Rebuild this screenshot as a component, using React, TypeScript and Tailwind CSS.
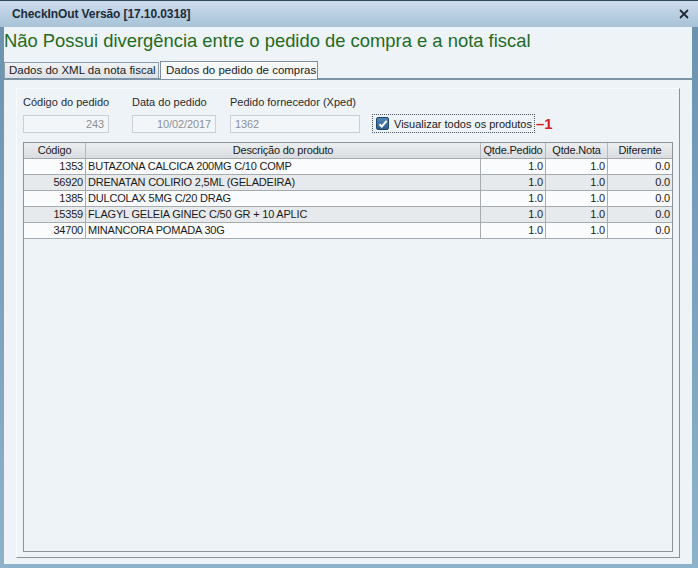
import React from 'react';

interface Produto {
    codigo: string;
    descricao: string;
    pedido: string;
    nota: string;
    diferente: string;
}

const PRODUTOS: Produto[] = [
    { codigo: '1353', descricao: 'BUTAZONA CALCICA 200MG C/10 COMP', pedido: '1.0', nota: '1.0', diferente: '0.0' },
    { codigo: '56920', descricao: 'DRENATAN COLIRIO 2,5ML (GELADEIRA)', pedido: '1.0', nota: '1.0', diferente: '0.0' },
    { codigo: '1385', descricao: 'DULCOLAX 5MG C/20 DRAG', pedido: '1.0', nota: '1.0', diferente: '0.0' },
    { codigo: '15359', descricao: 'FLAGYL GELEIA GINEC C/50 GR + 10 APLIC', pedido: '1.0', nota: '1.0', diferente: '0.0' },
    { codigo: '34700', descricao: 'MINANCORA POMADA 30G', pedido: '1.0', nota: '1.0', diferente: '0.0' },
];

const UI_FONT = 'font-["Liberation_Sans",Arial,sans-serif]';

function Field({ label, value, width, align }: { label: string; value: string; width: string; align: 'left' | 'right' }) {
    return (
        <div className="flex flex-col">
            <span className="h-[20px] text-[11px] leading-[14px] text-[#2b2b2b] whitespace-nowrap">{label}</span>
            <div
                className={`${width} h-[18px] border border-[#c9cfd5] bg-[#f3f6f9] px-[4px] text-[11px] tracking-[-0.1px] leading-[16px] text-[#8a8f94] ${align === 'right' ? 'text-right' : 'text-left'}`}
            >
                {value}
            </div>
        </div>
    );
}

export default function App() {
    return (
        <div className={`w-[698px] h-[568px] flex flex-col bg-gradient-to-b from-[#6b91ad] to-[#8fb2cb] border-t border-[#2f4b60] ${UI_FONT}`}>
            {/* barra de título */}
            <div className="h-[26px] flex items-center justify-between pl-[12px] pr-[9px] bg-gradient-to-b from-[#cddced] to-[#a7c2d7]">
                <span className="text-[12px] font-bold text-[#1d2c3a] tracking-[-0.1px]">CheckInOut Versão [17.10.0318]</span>
                <svg className="w-[10px] h-[10px]" viewBox="0 0 10 10" fill="none" stroke="#1f2a33" strokeWidth={1.8}>
                    <path d="M1 1l8 8M9 1l-8 8" />
                </svg>
            </div>

            {/* conteúdo */}
            <div className="flex-1 ml-[4px] mr-[6px] mb-[4px] bg-[#eef3f8] flex flex-col">
                <h1 className="h-[33px] pl-[0px] text-[18.4px] leading-[27px] text-[#1f6b1f] whitespace-nowrap">
                    Não Possui divergência entre o pedido de compra e a nota fiscal
                </h1>

                {/* abas */}
                <div className="h-[18px] flex items-end">
                    <div className="h-[16px] w-[155px] border border-b-0 border-[#8d9eac] bg-gradient-to-b from-[#f0f2f4] to-[#dde2e7] text-[11.5px] leading-[14px] text-[#1c1c1c] px-[4px] whitespace-nowrap">
                        Dados do XML da nota fiscal
                    </div>
                    <div className="h-[18px] w-[158px] ml-[1px] border border-b-0 border-[#7d8f9e] bg-[#f6f8fa] text-[11.5px] leading-[16px] text-[#1c1c1c] px-[5px] whitespace-nowrap relative top-[1px]">
                        Dados do pedido de compras
                    </div>
                </div>

                <div className="flex-1 border-t-2 border-[#7d93a6] flex flex-col pl-[12px] pr-[12px] pt-[8px] pb-[6px]">
                    <div className="flex-1 border-l border-t border-[#f8fafc] border-r border-b border-r-[#8c9196] border-b-[#8c9196] flex flex-col pl-[6px] pr-[6px] pt-[6px] pb-[5px]">
                        {/* campos */}
                        <div className="flex items-start">
                            <div className="w-[109px]">
                                <Field label="Código do pedido" value="243" width="w-[86px]" align="right" />
                            </div>
                            <div className="w-[98px]">
                                <Field label="Data do pedido" value="10/02/2017" width="w-[84px]" align="right" />
                            </div>
                            <div className="w-[142px]">
                                <Field label="Pedido fornecedor (Xped)" value="1362" width="w-[130px]" align="left" />
                            </div>
                            <div className="mt-[19px] flex items-center">
                                <div className="h-[19px] flex items-center gap-[5px] border border-dotted border-[#4a5560] pl-[3px] pr-[2px]">
                                    <div className="w-[13px] h-[13px] rounded-[2px] bg-gradient-to-b from-[#4f86b8] to-[#2e5f8e] border border-[#1f4466] flex items-center justify-center">
                                        <svg className="w-[10px] h-[10px]" viewBox="0 0 10 10" fill="none" stroke="#ffffff" strokeWidth={2}>
                                            <path d="M1.5 5.2l2.3 2.4L8.6 1.8" />
                                        </svg>
                                    </div>
                                    <span className="text-[11px] leading-[16px] text-[#1c1c1c] whitespace-nowrap">Visualizar todos os produtos</span>
                                </div>
                                <span className="text-[15px] font-bold leading-[16px] text-[#d71f26] ml-[1px]">–1</span>
                            </div>
                        </div>

                        {/* grade */}
                        <div className="flex-1 mt-[9px] border border-[#8e9296] bg-[#eef3f8] flex flex-col text-[11px] tracking-[-0.2px] text-[#1a1a1a]">
                            <div className="h-[16px] flex bg-gradient-to-b from-[#eceef0] to-[#d9dde1] border-b border-[#a4a8ac] leading-[15px]">
                                <div className="w-[62px] text-center border-r border-[#b4b8bc]">Código</div>
                                <div className="w-[395px] text-center border-r border-[#b4b8bc]">Descrição do produto</div>
                                <div className="w-[65px] text-center border-r border-[#b4b8bc]">Qtde.Pedido</div>
                                <div className="w-[62px] text-center border-r border-[#b4b8bc]">Qtde.Nota</div>
                                <div className="flex-1 text-center">Diferente</div>
                            </div>
                            {PRODUTOS.map((p, i) => (
                                <div
                                    key={p.codigo}
                                    className={`h-[16px] flex border-b border-[#a6abb0] leading-[15px] ${i % 2 === 0 ? 'bg-[#fafbfc]' : 'bg-[#e7eaed]'}`}
                                >
                                    <div className="w-[62px] text-right pr-[2px] border-r border-[#a6abb0]">{p.codigo}</div>
                                    <div className="w-[395px] pl-[2px] border-r border-[#a6abb0] whitespace-nowrap">{p.descricao}</div>
                                    <div className="w-[65px] text-right pr-[2px] border-r border-[#a6abb0]">{p.pedido}</div>
                                    <div className="w-[62px] text-right pr-[2px] border-r border-[#a6abb0]">{p.nota}</div>
                                    <div className="flex-1 text-right pr-[2px]">{p.diferente}</div>
                                </div>
                            ))}
                        </div>
                    </div>
                </div>
            </div>
        </div>
    );
}
